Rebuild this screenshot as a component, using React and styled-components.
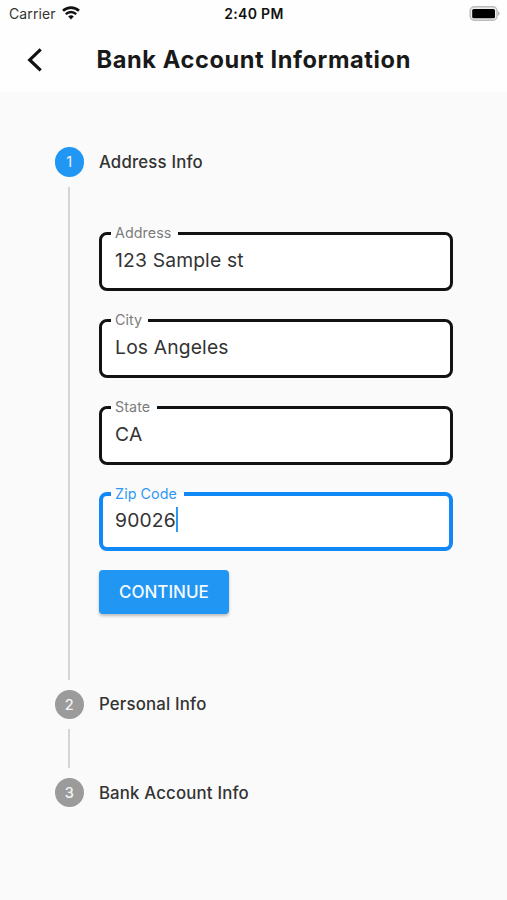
import styled, { createGlobalStyle } from "styled-components";

const GlobalStyle = createGlobalStyle`
  * {
    box-sizing: border-box;
  }
  body {
    margin: 0;
    background-color: #fafafa;
    font-family: Inter, "Liberation Sans", sans-serif;
    color: #333;
  }
`;

const Container = styled.div`
  width: 100%;
  min-height: 100vh;
  background-color: #fafafa;
`;

const Header = styled.header`
  height: 92px;
  background-color: #fefefe;
`;

const StatusBar = styled.div`
  height: 26px;
  padding: 0 7px 0 9px;
  display: grid;
  grid-template-columns: 1fr auto 1fr;
  align-items: center;
  color: #111;
`;

const Carrier = styled.div`
  display: flex;
  align-items: center;
  gap: 6px;
  font-size: 14px;
  letter-spacing: 0.1px;
  color: #333;
`;

const Time = styled.div`
  margin-right: 1px;
  font-size: 14px;
  font-weight: 600;
  letter-spacing: 0.3px;
`;

const Battery = styled.svg`
  justify-self: end;
`;

const AppBar = styled.div`
  height: 67px;
  padding-left: 27px;
  display: flex;
  align-items: center;
`;

const BackButton = styled.button`
  width: 69.5px;
  height: 26px;
  padding: 0;
  border: none;
  background: none;
  display: flex;
  color: #111;
`;

const Title = styled.h1`
  margin: 0;
  font-size: 23.6px;
  font-weight: 700;
  letter-spacing: 0.6px;
  white-space: nowrap;
  color: #191919;
`;

const Stepper = styled.main`
  padding: 55.3px 54px 0 54.5px;
`;

const StepHeader = styled.div`
  height: 29.4px;
  display: flex;
  align-items: center;
  gap: 15px;
`;

const StepNumber = styled.div`
  width: 29.4px;
  height: 29.4px;
  border-radius: 50%;
  display: flex;
  align-items: center;
  justify-content: center;
  font-size: 14.5px;
  font-weight: ${(props) => (props.$active ? 400 : 500)};
  color: #f4f4f4;
  background-color: ${(props) => (props.$active ? "#2196f3" : "#9b9b9b")};
`;

const StepTitle = styled.div`
  font-size: 16.8px;
  font-weight: 500;
  letter-spacing: 0.18px;
`;

const StepBody = styled.div`
  height: ${(props) => props.$height};
  margin: 10px 0 9.8px 13.6px;
  padding-left: 29px;
  border-left: 2px solid #d4d4d4;
`;

const Form = styled.form`
  padding-top: 38.8px;
  display: flex;
  flex-direction: column;
  align-items: flex-start;
`;

const Field = styled.fieldset`
  width: 354px;
  height: ${(props) => (props.$focused ? "65px" : "66px")};
  margin: 0 0 ${(props) => (props.$focused ? "20px" : "20.7px")};
  padding: ${(props) => (props.$focused ? "0 12px" : "0 13px")};
  border: ${(props) => (props.$focused ? "4px solid #1088f5" : "3px solid #121212")};
  border-radius: 8px;
  background-color: #fff;
`;

const Label = styled.legend`
  width: ${(props) => props.$width};
  height: 17px;
  margin-left: -4px;
  padding: 0 0 0 4px;
  font-size: 14.3px;
  line-height: 15.5px;
  letter-spacing: 0.05px;
  white-space: nowrap;
  color: ${(props) => (props.$focused ? "#2f98f5" : "#7c7c7c")};
`;

const Value = styled.div`
  height: 26px;
  margin-top: ${(props) => (props.$focused ? "4px" : "5px")};
  display: flex;
  align-items: center;
  font-size: 19.3px;
  line-height: 26px;
  letter-spacing: 0.15px;
  white-space: nowrap;
`;

const Caret = styled.span`
  width: 2px;
  height: 25px;
  background-color: #2f98f5;
`;

const Button = styled.button`
  width: 129.5px;
  height: 44px;
  margin-top: -0.7px;
  padding: 0;
  border: none;
  border-radius: 4px;
  font-family: inherit;
  font-size: 17px;
  font-weight: 500;
  color: #f5faff;
  background-color: #2196f3;
  box-shadow: 0 2px 3px rgba(0, 0, 0, 0.25);
`;

const fields = [
  { label: "Address", value: "123 Sample st", notch: "67px" },
  { label: "City", value: "Los Angeles", notch: "37px" },
  { label: "State", value: "CA", notch: "46px" },
  { label: "Zip Code", value: "90026", notch: "73px", focused: true },
];

const App = () => {
  return (
    <Container>
      <GlobalStyle />
      <Header>
        <StatusBar>
          <Carrier>
            Carrier
            <svg width="18" height="14" viewBox="0 0 18 14" fill="none">
              <path d="M1 4.8C5.5.5 12.5.5 17 4.8" stroke="#111" strokeWidth="2.6" />
              <path d="M3.8 8.1C6.8 5.2 11.2 5.2 14.2 8.1" stroke="#111" strokeWidth="2.4" />
              <path d="M6.2 10.5a4 4 0 0 1 5.6 0L9 13.5z" fill="#111" />
            </svg>
          </Carrier>
          <Time>2:40 PM</Time>
          <Battery width="31" height="15" viewBox="0 0 31 15">
            <rect x="1.2" y="0.8" width="26.8" height="13.4" rx="4" fill="#eee" stroke="#bbb" strokeWidth="1.4" />
            <rect x="3.2" y="2.9" width="22.8" height="9.4" rx="1.6" fill="#000" />
            <path d="M28.9 5.2c2.3.8 2.3 3.8 0 4.6z" fill="#b5b5b5" />
          </Battery>
        </StatusBar>
        <AppBar>
          <BackButton aria-label="Back">
            <svg width="16" height="26" viewBox="0 0 16 26" fill="none">
              <path d="M13.7 2.4 2.7 12.9l11 10.5" stroke="currentColor" strokeWidth="3.2" />
            </svg>
          </BackButton>
          <Title>Bank Account Information</Title>
        </AppBar>
      </Header>
      <Stepper>
        <StepHeader>
          <StepNumber $active>1</StepNumber>
          <StepTitle>Address Info</StepTitle>
        </StepHeader>
        <StepBody $height="493.3px">
          <Form>
            {fields.map((field) => (
              <Field key={field.label} $focused={field.focused}>
                <Label $width={field.notch} $focused={field.focused}>
                  {field.label}
                </Label>
                <Value $focused={field.focused}>
                  {field.value}
                  {field.focused && <Caret />}
                </Value>
              </Field>
            ))}
            <Button type="button">CONTINUE</Button>
          </Form>
        </StepBody>
        <StepHeader>
          <StepNumber>2</StepNumber>
          <StepTitle>Personal Info</StepTitle>
        </StepHeader>
        <StepBody $height="39px" />
        <StepHeader>
          <StepNumber>3</StepNumber>
          <StepTitle>Bank Account Info</StepTitle>
        </StepHeader>
      </Stepper>
    </Container>
  );
};

export default App;
